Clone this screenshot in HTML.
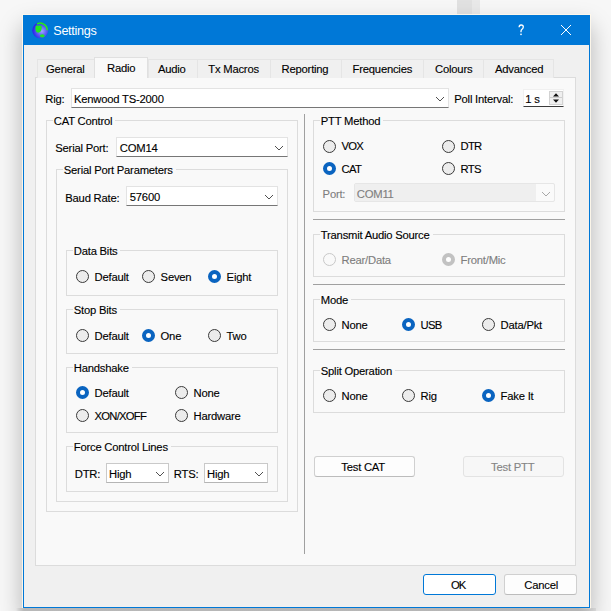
<!DOCTYPE html>
<html><head><meta charset="utf-8"><style>
html,body{margin:0;padding:0;width:611px;height:611px;overflow:hidden;background:#f4f4f4}
.a{position:absolute}
.t{position:absolute;font-family:"Liberation Sans",sans-serif;line-height:12px;white-space:nowrap;letter-spacing:-0.22px;-webkit-text-stroke:0.12px currentColor}
</style></head><body>
<div class="a" style="left:0;top:0;width:611px;height:611px;background:#f7f7f7"></div>
<div class="a" style="left:457px;top:0;width:15px;height:15px;background:#e1e1e1"></div><div class="a" style="left:472px;top:0;width:8px;height:15px;background:#e9e9e9"></div>
<div class="a" style="left:23px;top:15px;width:567px;height:593px;box-shadow:0 0 0 1px rgba(255,248,235,0.9), 0 12px 22px 1px rgba(0,0,0,0.27)"></div>
<div class="a" style="left:16px;top:608px;width:580px;height:3px;background:linear-gradient(to right,rgba(181,181,181,0),#b8b8b8 8px,#b5b5b5 97%,rgba(181,181,181,0.3))"></div>
<div class="a" style="left:23px;top:15px;width:567px;height:593px;box-sizing:border-box;background:#f0f0f0;border:1px solid #0078d7;"></div>
<div class="a" style="left:23px;top:15px;width:567px;height:30px;box-sizing:border-box;background:#0078d7;"></div>
<svg class="a" style="left:32px;top:22px" width="17" height="17" viewBox="0 0 17 17">
<defs><radialGradient id="g1" cx="0.6" cy="0.55" r="0.55"><stop offset="0" stop-color="#a0a8ff"/><stop offset="0.55" stop-color="#5a5cf8"/><stop offset="1" stop-color="#2a2ae8"/></radialGradient></defs>
<circle cx="8.2" cy="8.3" r="8" fill="url(#g1)"/>
<path d="M5 2 A7 7 0 0 1 15.2 8.2" fill="none" stroke="#22e822" stroke-width="1.6"/>
<path d="M3.8 4 C4.6 3.3 6 3.6 6.6 3.9 L7.6 3.3 C8.8 3.4 10 4.4 9.8 5.6 C9.6 6.6 9.6 7.6 9.2 8.6 C8.6 10 7.2 10.8 5.8 10.6 C4.2 10.3 3.6 8.8 3.5 7.2 C3.4 5.8 3.4 4.6 3.8 4Z" fill="#22e822"/>
<ellipse cx="10.3" cy="13.8" rx="2.4" ry="1.6" fill="#22e822"/>
</svg>
<div class="t" style="left:53.30px;top:24.51px;color:#fff;font-size:12.6px;letter-spacing:-0.3px;-webkit-text-stroke:0;">Settings</div>
<svg class="a" style="left:516px;top:23px" width="10" height="14" viewBox="0 0 10 14"><path d="M3.1 4.3 C3.1 2.8 3.9 2 5.2 2 C6.5 2 7.3 2.9 7.3 4.1 C7.3 5.3 6.6 6 5.8 6.6 C5.2 7.1 5 7.5 5 8.6 L5 9.3" fill="none" stroke="#fff" stroke-width="1.3"/><rect x="4.25" y="10.6" width="1.5" height="1.5" fill="#fff"/></svg>
<svg class="a" style="left:560px;top:24px" width="12" height="12" viewBox="0 0 12 12"><path d="M1 1 L11 11 M11 1 L1 11" stroke="#fff" stroke-width="1"/></svg>
<div class="a" style="left:35px;top:77px;width:541px;height:489px;box-sizing:border-box;background:#f9f9f9;border:1px solid #dcdcdc;"></div>
<div class="a" style="left:37px;top:59px;width:58px;height:19px;box-sizing:border-box;background:#f0f0f0;border:1px solid #e5e5e5;border-bottom:none;"></div>
<div class="t" style="left:46.10px;top:62.60px;color:#000;font-size:11.25px;">General</div>
<div class="a" style="left:148px;top:59px;width:50px;height:19px;box-sizing:border-box;background:#f0f0f0;border:1px solid #e5e5e5;border-bottom:none;"></div>
<div class="t" style="left:157.90px;top:62.60px;color:#000;font-size:11.25px;">Audio</div>
<div class="a" style="left:197px;top:59px;width:74px;height:19px;box-sizing:border-box;background:#f0f0f0;border:1px solid #e5e5e5;border-bottom:none;"></div>
<div class="t" style="left:208.30px;top:62.60px;color:#000;font-size:11.25px;">Tx Macros</div>
<div class="a" style="left:270px;top:59px;width:72px;height:19px;box-sizing:border-box;background:#f0f0f0;border:1px solid #e5e5e5;border-bottom:none;"></div>
<div class="t" style="left:281.60px;top:62.60px;color:#000;font-size:11.25px;">Reporting</div>
<div class="a" style="left:341px;top:59px;width:83px;height:19px;box-sizing:border-box;background:#f0f0f0;border:1px solid #e5e5e5;border-bottom:none;"></div>
<div class="t" style="left:352.60px;top:62.60px;color:#000;font-size:11.25px;">Frequencies</div>
<div class="a" style="left:423px;top:59px;width:61px;height:19px;box-sizing:border-box;background:#f0f0f0;border:1px solid #e5e5e5;border-bottom:none;"></div>
<div class="t" style="left:435.10px;top:62.60px;color:#000;font-size:11.25px;">Colours</div>
<div class="a" style="left:483px;top:59px;width:71px;height:19px;box-sizing:border-box;background:#f0f0f0;border:1px solid #e5e5e5;border-bottom:none;"></div>
<div class="t" style="left:495.00px;top:62.60px;color:#000;font-size:11.25px;">Advanced</div>
<div class="a" style="left:94px;top:57px;width:54px;height:21px;box-sizing:border-box;background:#f9f9f9;border:1px solid #e0e0e0;border-bottom:none;"></div>
<div class="a" style="left:95px;top:77px;width:52px;height:1px;background:#f9f9f9"></div>
<div class="t" style="left:107.00px;top:61.60px;color:#000;font-size:11.25px;">Radio</div>
<div class="t" style="left:45.30px;top:92.60px;color:#000;font-size:11.25px;">Rig:</div>
<div class="a" style="left:71px;top:88px;width:378px;height:20px;box-sizing:border-box;background:#fff;border:1px solid #e3e3e3;border-bottom:1px solid #767676;"></div>
<div class="t" style="left:74.00px;top:92.60px;color:#000;font-size:11.25px;">Kenwood TS-2000</div>
<svg class="a" style="left:435px;top:96px" width="10" height="6" viewBox="0 0 10 6"><path d="M1 1 L5 5 L9 1" fill="none" stroke="#505050" stroke-width="1"/></svg>
<div class="t" style="left:454.30px;top:92.60px;color:#000;font-size:11.25px;">Poll Interval:</div>
<div class="a" style="left:523px;top:89px;width:41px;height:18px;box-sizing:border-box;background:#fff;border:1px solid #f0f0f0;border-bottom:1px solid #3a3a3a;"></div>
<div class="t" style="left:525.30px;top:92.60px;color:#000;font-size:11.25px;">1 s</div>
<div class="a" style="left:549px;top:91px;width:14px;height:14px;box-sizing:border-box;background:#efefef;border:1px solid #d2d2d2;"></div>
<div class="a" style="left:550px;top:97px;width:12px;height:1px;background:#cfcfcf"></div>
<svg class="a" style="left:552px;top:92px" width="8" height="12" viewBox="0 0 8 12"><path d="M1 4.4 L4 1.3 L7 4.4Z M1 7.6 L4 10.7 L7 7.6Z" fill="#111"/></svg>
<div class="a" style="left:46px;top:120px;width:252px;height:392px;box-sizing:border-box;border:1px solid #dcdcdc;"></div>
<div class="t" style="left:53.80px;top:114.60px;color:#000;font-size:11.25px;"><span style="background:#f9f9f9;padding:0 3px 0 1px;margin-left:-1px">CAT Control</span></div>
<div class="t" style="left:55.30px;top:141.60px;color:#000;font-size:11.25px;">Serial Port:</div>
<div class="a" style="left:116px;top:137px;width:172px;height:20px;box-sizing:border-box;background:#fff;border:1px solid #e3e3e3;border-bottom:1px solid #767676;"></div>
<div class="t" style="left:119.80px;top:141.60px;color:#000;font-size:11.25px;">COM14</div>
<svg class="a" style="left:274px;top:145px" width="10" height="6" viewBox="0 0 10 6"><path d="M1 1 L5 5 L9 1" fill="none" stroke="#505050" stroke-width="1"/></svg>
<div class="a" style="left:56px;top:169px;width:232px;height:333px;box-sizing:border-box;border:1px solid #dcdcdc;"></div>
<div class="t" style="left:63.80px;top:163.60px;color:#000;font-size:11.25px;"><span style="background:#f9f9f9;padding:0 3px 0 1px;margin-left:-1px">Serial Port Parameters</span></div>
<div class="t" style="left:65.30px;top:191.60px;color:#000;font-size:11.25px;">Baud Rate:</div>
<div class="a" style="left:126px;top:186px;width:152px;height:20px;box-sizing:border-box;background:#fff;border:1px solid #e3e3e3;border-bottom:1px solid #767676;"></div>
<div class="t" style="left:129.80px;top:190.60px;color:#000;font-size:11.25px;">57600</div>
<svg class="a" style="left:264px;top:194px" width="10" height="6" viewBox="0 0 10 6"><path d="M1 1 L5 5 L9 1" fill="none" stroke="#505050" stroke-width="1"/></svg>
<div class="a" style="left:66px;top:250px;width:212px;height:46px;box-sizing:border-box;border:1px solid #dcdcdc;"></div>
<div class="t" style="left:73.80px;top:244.60px;color:#000;font-size:11.25px;"><span style="background:#f9f9f9;padding:0 3px 0 1px;margin-left:-1px">Data Bits</span></div>
<div class="a" style="left:76px;top:270px;width:13px;height:13px;border-radius:50%;box-sizing:border-box;border:1px solid #3a3a3a;background:#ececec"></div>
<div class="t" style="left:94.60px;top:270.60px;color:#000;font-size:11.25px;">Default</div>
<div class="a" style="left:142px;top:270px;width:13px;height:13px;border-radius:50%;box-sizing:border-box;border:1px solid #3a3a3a;background:#ececec"></div>
<div class="t" style="left:160.60px;top:270.60px;color:#000;font-size:11.25px;">Seven</div>
<div class="a" style="left:208px;top:270px;width:13px;height:13px;border-radius:50%;box-sizing:border-box;border:4px solid #0a64c0;background:#fff"></div>
<div class="t" style="left:226.60px;top:270.60px;color:#000;font-size:11.25px;">Eight</div>
<div class="a" style="left:66px;top:309px;width:212px;height:45px;box-sizing:border-box;border:1px solid #dcdcdc;"></div>
<div class="t" style="left:73.80px;top:303.60px;color:#000;font-size:11.25px;"><span style="background:#f9f9f9;padding:0 3px 0 1px;margin-left:-1px">Stop Bits</span></div>
<div class="a" style="left:76px;top:329px;width:13px;height:13px;border-radius:50%;box-sizing:border-box;border:1px solid #3a3a3a;background:#ececec"></div>
<div class="t" style="left:94.60px;top:329.60px;color:#000;font-size:11.25px;">Default</div>
<div class="a" style="left:142px;top:329px;width:13px;height:13px;border-radius:50%;box-sizing:border-box;border:4px solid #0a64c0;background:#fff"></div>
<div class="t" style="left:160.60px;top:329.60px;color:#000;font-size:11.25px;">One</div>
<div class="a" style="left:208px;top:329px;width:13px;height:13px;border-radius:50%;box-sizing:border-box;border:1px solid #3a3a3a;background:#ececec"></div>
<div class="t" style="left:226.60px;top:329.60px;color:#000;font-size:11.25px;">Two</div>
<div class="a" style="left:66px;top:367px;width:212px;height:66px;box-sizing:border-box;border:1px solid #dcdcdc;"></div>
<div class="t" style="left:73.80px;top:361.60px;color:#000;font-size:11.25px;"><span style="background:#f9f9f9;padding:0 3px 0 1px;margin-left:-1px">Handshake</span></div>
<div class="a" style="left:76px;top:386px;width:13px;height:13px;border-radius:50%;box-sizing:border-box;border:4px solid #0a64c0;background:#fff"></div>
<div class="t" style="left:94.60px;top:386.60px;color:#000;font-size:11.25px;">Default</div>
<div class="a" style="left:175px;top:386px;width:13px;height:13px;border-radius:50%;box-sizing:border-box;border:1px solid #3a3a3a;background:#ececec"></div>
<div class="t" style="left:193.60px;top:386.60px;color:#000;font-size:11.25px;">None</div>
<div class="a" style="left:76px;top:409px;width:13px;height:13px;border-radius:50%;box-sizing:border-box;border:1px solid #3a3a3a;background:#ececec"></div>
<div class="t" style="left:94.60px;top:409.60px;color:#000;font-size:11.25px;letter-spacing:-0.75px;">XON/XOFF</div>
<div class="a" style="left:175px;top:409px;width:13px;height:13px;border-radius:50%;box-sizing:border-box;border:1px solid #3a3a3a;background:#ececec"></div>
<div class="t" style="left:193.60px;top:409.60px;color:#000;font-size:11.25px;">Hardware</div>
<div class="a" style="left:66px;top:446px;width:212px;height:46px;box-sizing:border-box;border:1px solid #dcdcdc;"></div>
<div class="t" style="left:73.80px;top:440.60px;color:#000;font-size:11.25px;"><span style="background:#f9f9f9;padding:0 3px 0 1px;margin-left:-1px">Force Control Lines</span></div>
<div class="t" style="left:74.80px;top:468.10px;color:#000;font-size:11.25px;">DTR:</div>
<div class="a" style="left:106px;top:463px;width:63px;height:20px;box-sizing:border-box;background:#fff;border:1px solid #c9c9c9;border-bottom-color:#b5b5b5;"></div>
<div class="t" style="left:109.00px;top:467.90px;color:#000;font-size:11.25px;">High</div>
<svg class="a" style="left:155px;top:471px" width="10" height="6" viewBox="0 0 10 6"><path d="M1 1 L5 5 L9 1" fill="none" stroke="#505050" stroke-width="1"/></svg>
<div class="t" style="left:173.80px;top:468.10px;color:#000;font-size:11.25px;">RTS:</div>
<div class="a" style="left:204px;top:463px;width:64px;height:20px;box-sizing:border-box;background:#fff;border:1px solid #c9c9c9;border-bottom-color:#b5b5b5;"></div>
<div class="t" style="left:207.00px;top:467.90px;color:#000;font-size:11.25px;">High</div>
<svg class="a" style="left:254px;top:471px" width="10" height="6" viewBox="0 0 10 6"><path d="M1 1 L5 5 L9 1" fill="none" stroke="#505050" stroke-width="1"/></svg>
<div class="a" style="left:304px;top:114px;width:1px;height:440px;background:#a0a0a0"></div>
<div class="a" style="left:313px;top:120px;width:252px;height:92px;box-sizing:border-box;border:1px solid #dcdcdc;"></div>
<div class="t" style="left:320.80px;top:114.60px;color:#000;font-size:11.25px;"><span style="background:#f9f9f9;padding:0 3px 0 1px;margin-left:-1px">PTT Method</span></div>
<div class="a" style="left:323px;top:139.5px;width:13px;height:13px;border-radius:50%;box-sizing:border-box;border:1px solid #3a3a3a;background:#ececec"></div>
<div class="t" style="left:341.60px;top:140.10px;color:#000;font-size:11.25px;letter-spacing:-0.75px;">VOX</div>
<div class="a" style="left:442px;top:139.5px;width:13px;height:13px;border-radius:50%;box-sizing:border-box;border:1px solid #3a3a3a;background:#ececec"></div>
<div class="t" style="left:460.60px;top:140.10px;color:#000;font-size:11.25px;letter-spacing:-0.75px;">DTR</div>
<div class="a" style="left:323px;top:162px;width:13px;height:13px;border-radius:50%;box-sizing:border-box;border:4px solid #0a64c0;background:#fff"></div>
<div class="t" style="left:341.60px;top:162.60px;color:#000;font-size:11.25px;letter-spacing:-0.75px;">CAT</div>
<div class="a" style="left:442px;top:162px;width:13px;height:13px;border-radius:50%;box-sizing:border-box;border:1px solid #3a3a3a;background:#ececec"></div>
<div class="t" style="left:460.60px;top:162.60px;color:#000;font-size:11.25px;letter-spacing:-0.75px;">RTS</div>
<div class="t" style="left:322.60px;top:187.60px;color:#7e7e7e;font-size:11.25px;">Port:</div>
<div class="a" style="left:354px;top:183px;width:201px;height:19px;box-sizing:border-box;background:#fafafa;border:1px solid #e6e6e6;border-radius:2px;"></div>
<div class="a" style="left:355px;top:184px;width:181px;height:17px;box-sizing:border-box;background:#efefef;"></div>
<div class="t" style="left:356.80px;top:187.60px;color:#7e7e7e;font-size:11.25px;">COM11</div>
<svg class="a" style="left:541px;top:191px" width="10" height="6" viewBox="0 0 10 6"><path d="M1 1 L5 5 L9 1" fill="none" stroke="#a8a8a8" stroke-width="1"/></svg>
<div class="a" style="left:313px;top:219px;width:252px;height:1px;background:#a0a0a0"></div>
<div class="a" style="left:313px;top:234px;width:252px;height:43px;box-sizing:border-box;border:1px solid #dcdcdc;"></div>
<div class="t" style="left:320.80px;top:228.60px;color:#000;font-size:11.25px;"><span style="background:#f9f9f9;padding:0 3px 0 1px;margin-left:-1px">Transmit Audio Source</span></div>
<div class="a" style="left:323px;top:253px;width:13px;height:13px;border-radius:50%;box-sizing:border-box;border:1px solid #c8c8c8;background:#f9f9f9"></div>
<div class="t" style="left:341.60px;top:253.60px;color:#7e7e7e;font-size:11.25px;">Rear/Data</div>
<div class="a" style="left:442px;top:253px;width:13px;height:13px;border-radius:50%;box-sizing:border-box;border:4px solid #c2c2c2;background:#fff"></div>
<div class="t" style="left:460.60px;top:253.60px;color:#7e7e7e;font-size:11.25px;">Front/Mic</div>
<div class="a" style="left:313px;top:284px;width:252px;height:1px;background:#a0a0a0"></div>
<div class="a" style="left:313px;top:299px;width:252px;height:43px;box-sizing:border-box;border:1px solid #dcdcdc;"></div>
<div class="t" style="left:320.80px;top:293.60px;color:#000;font-size:11.25px;"><span style="background:#f9f9f9;padding:0 3px 0 1px;margin-left:-1px">Mode</span></div>
<div class="a" style="left:323px;top:318px;width:13px;height:13px;border-radius:50%;box-sizing:border-box;border:1px solid #3a3a3a;background:#ececec"></div>
<div class="t" style="left:341.60px;top:318.60px;color:#000;font-size:11.25px;">None</div>
<div class="a" style="left:402px;top:318px;width:13px;height:13px;border-radius:50%;box-sizing:border-box;border:4px solid #0a64c0;background:#fff"></div>
<div class="t" style="left:420.60px;top:318.60px;color:#000;font-size:11.25px;letter-spacing:-0.75px;">USB</div>
<div class="a" style="left:482px;top:318px;width:13px;height:13px;border-radius:50%;box-sizing:border-box;border:1px solid #3a3a3a;background:#ececec"></div>
<div class="t" style="left:500.60px;top:318.60px;color:#000;font-size:11.25px;">Data/Pkt</div>
<div class="a" style="left:313px;top:349px;width:252px;height:1px;background:#a0a0a0"></div>
<div class="a" style="left:313px;top:370px;width:252px;height:43px;box-sizing:border-box;border:1px solid #dcdcdc;"></div>
<div class="t" style="left:320.80px;top:364.60px;color:#000;font-size:11.25px;"><span style="background:#f9f9f9;padding:0 3px 0 1px;margin-left:-1px">Split Operation</span></div>
<div class="a" style="left:323px;top:389px;width:13px;height:13px;border-radius:50%;box-sizing:border-box;border:1px solid #3a3a3a;background:#ececec"></div>
<div class="t" style="left:341.60px;top:389.60px;color:#000;font-size:11.25px;">None</div>
<div class="a" style="left:402px;top:389px;width:13px;height:13px;border-radius:50%;box-sizing:border-box;border:1px solid #3a3a3a;background:#ececec"></div>
<div class="t" style="left:420.60px;top:389.60px;color:#000;font-size:11.25px;">Rig</div>
<div class="a" style="left:482px;top:389px;width:13px;height:13px;border-radius:50%;box-sizing:border-box;border:4px solid #0a64c0;background:#fff"></div>
<div class="t" style="left:500.60px;top:389.60px;color:#000;font-size:11.25px;">Fake It</div>
<div class="a" style="left:314px;top:456px;width:101px;height:21px;box-sizing:border-box;background:#fdfdfd;border:1px solid #d0d0d0;border-bottom-color:#bcbcbc;border-radius:3px;"></div>
<div class="t" style="left:341.30px;top:461.10px;color:#000;font-size:11.25px;">Test CAT</div>
<div class="a" style="left:463px;top:456px;width:101px;height:21px;box-sizing:border-box;background:#f7f7f7;border:1px solid #e3e3e3;border-radius:3px;"></div>
<div class="t" style="left:491.10px;top:461.10px;color:#858585;font-size:11.25px;">Test PTT</div>
<div class="a" style="left:423px;top:574px;width:73px;height:21px;box-sizing:border-box;background:#fff;border:1.5px solid #0078d7;border-radius:3px;"></div>
<div class="t" style="left:451.00px;top:579.10px;color:#000;font-size:11.25px;letter-spacing:-1px;">OK</div>
<div class="a" style="left:504px;top:574px;width:73px;height:21px;box-sizing:border-box;background:#fdfdfd;border:1px solid #d0d0d0;border-bottom-color:#bcbcbc;border-radius:3px;"></div>
<div class="t" style="left:524.30px;top:579.10px;color:#000;font-size:11.25px;">Cancel</div>
</body></html>
